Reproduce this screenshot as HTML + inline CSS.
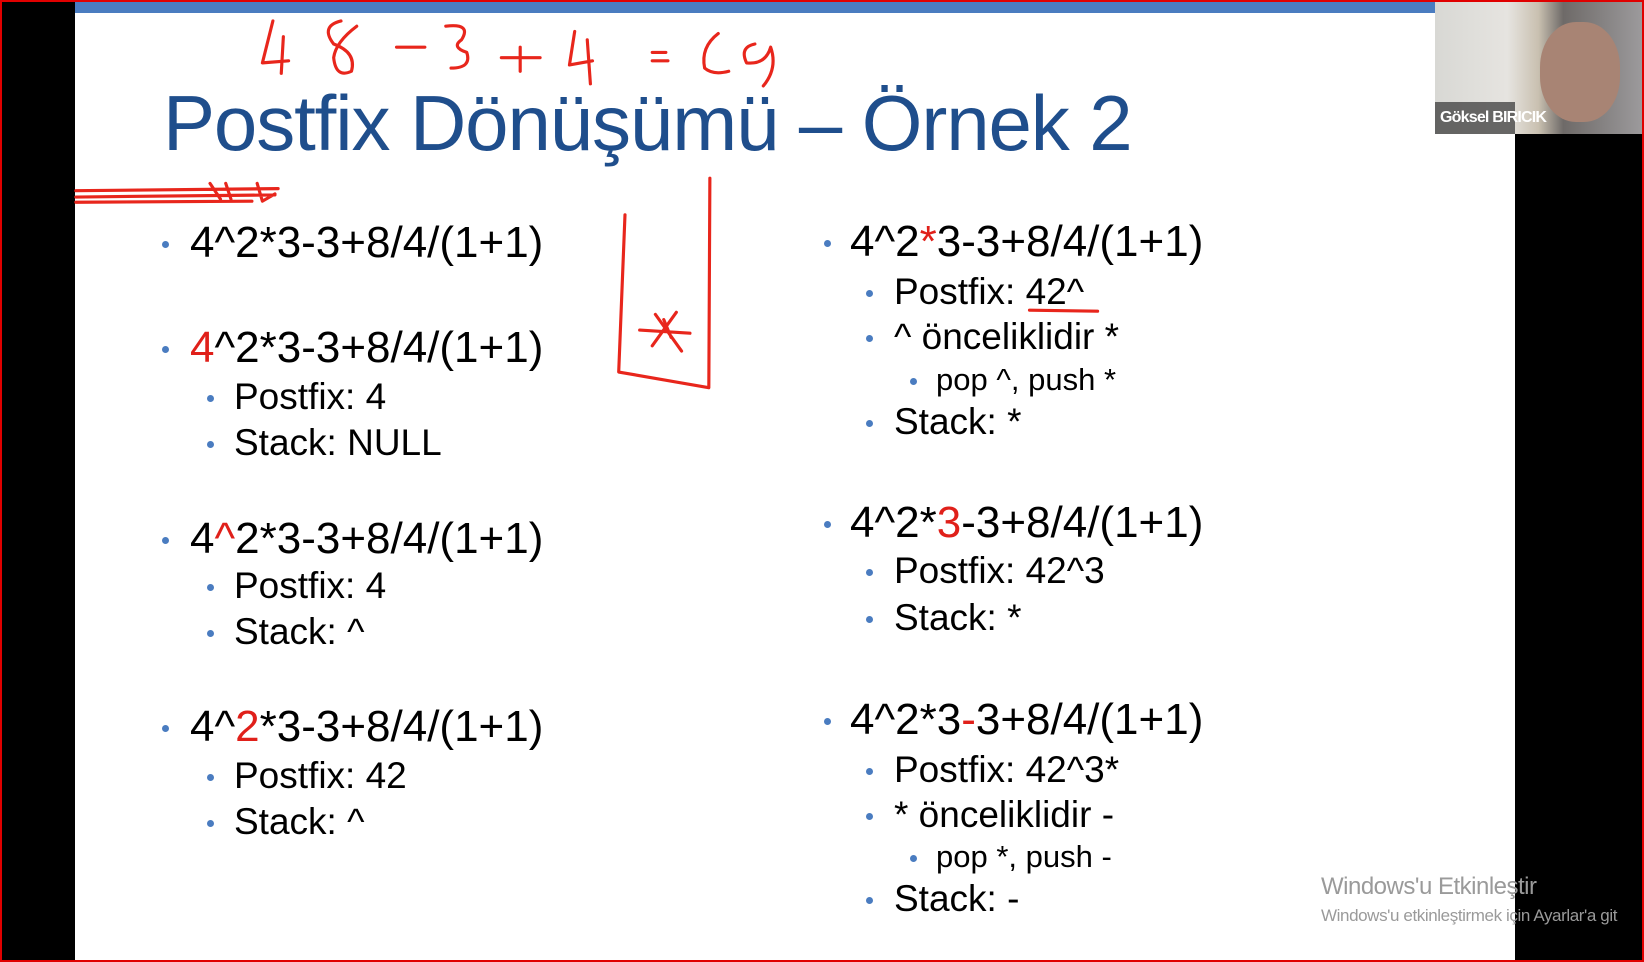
<!DOCTYPE html>
<html><head><meta charset="utf-8"><style>
*{margin:0;padding:0}
body{width:1644px;height:962px;overflow:hidden;background:#000;position:relative;font-family:"Liberation Sans",Arial,sans-serif}
#frame{position:absolute;left:0;top:0;width:1640px;height:958px;border:2px solid #e00000}
#slide{position:absolute;left:75px;top:2px;width:1440px;height:958px;background:#fff}
#bar{position:absolute;left:75px;top:2px;width:1360px;height:11px;background:#4a7cc0}
.t{position:absolute;white-space:nowrap;color:#000;line-height:1}
.l1{font-size:44px}
.l2{font-size:37px}
.l3{font-size:31px}
.r{color:#e0201a}
.b{position:absolute;width:7px;height:7px;border-radius:50%;background:#4a7cc0}
#title{position:absolute;left:163px;top:84px;font-size:78px;color:#1f4e8c;white-space:nowrap;line-height:1;letter-spacing:-1.1px}
#cam{position:absolute;left:1435px;top:2px;width:207px;height:132px;background:linear-gradient(90deg,#d8d8d4 0,#e6e4e0 35%,#c9c0b0 50%,#6e6a68 62%,#9c9a9c 100%)}
#face{position:absolute;left:1540px;top:22px;width:80px;height:100px;border-radius:45%;background:#a88474}
#name{position:absolute;left:1435px;top:102px;width:80px;height:32px;background:rgba(60,60,60,.75);color:#fff;font-size:16px;font-weight:bold;line-height:32px;padding-left:5px;box-sizing:border-box;white-space:nowrap;letter-spacing:-.8px}
.wm{position:absolute;color:#9a9a9a;white-space:nowrap}
</style></head><body>
<div id="frame"></div>
<div id="slide"></div>
<div id="bar"></div>
<div id="title">Postfix Dönüşümü – Örnek 2</div>

<div class="b" style="left:162px;top:241px"></div><div class="t l1" style="left:190px;top:221px">4^2*3-3+8/4/(1+1)</div>
<div class="b" style="left:162px;top:346px"></div><div class="t l1" style="left:190px;top:326px"><span class="r">4</span>^2*3-3+8/4/(1+1)</div>
<div class="b" style="left:207px;top:395px"></div><div class="t l2" style="left:234px;top:378px">Postfix: 4</div>
<div class="b" style="left:207px;top:441px"></div><div class="t l2" style="left:234px;top:424px">Stack: NULL</div>
<div class="b" style="left:162px;top:537px"></div><div class="t l1" style="left:190px;top:517px">4<span class="r">^</span>2*3-3+8/4/(1+1)</div>
<div class="b" style="left:207px;top:584px"></div><div class="t l2" style="left:234px;top:567px">Postfix: 4</div>
<div class="b" style="left:207px;top:630px"></div><div class="t l2" style="left:234px;top:613px">Stack: ^</div>
<div class="b" style="left:162px;top:725px"></div><div class="t l1" style="left:190px;top:705px">4^<span class="r">2</span>*3-3+8/4/(1+1)</div>
<div class="b" style="left:207px;top:774px"></div><div class="t l2" style="left:234px;top:757px">Postfix: 42</div>
<div class="b" style="left:207px;top:820px"></div><div class="t l2" style="left:234px;top:803px">Stack: ^</div>

<div class="b" style="left:824px;top:240px"></div><div class="t l1" style="left:850px;top:220px">4^2<span class="r">*</span>3-3+8/4/(1+1)</div>
<div class="b" style="left:866px;top:290px"></div><div class="t l2" style="left:894px;top:273px">Postfix: 42^</div>
<div class="b" style="left:866px;top:335px"></div><div class="t l2" style="left:894px;top:318px">^ önceliklidir *</div>
<div class="b" style="left:910px;top:378px"></div><div class="t l3" style="left:936px;top:364px">pop ^, push *</div>
<div class="b" style="left:866px;top:420px"></div><div class="t l2" style="left:894px;top:403px">Stack: *</div>
<div class="b" style="left:824px;top:521px"></div><div class="t l1" style="left:850px;top:501px">4^2*<span class="r">3</span>-3+8/4/(1+1)</div>
<div class="b" style="left:866px;top:569px"></div><div class="t l2" style="left:894px;top:552px">Postfix: 42^3</div>
<div class="b" style="left:866px;top:616px"></div><div class="t l2" style="left:894px;top:599px">Stack: *</div>
<div class="b" style="left:824px;top:718px"></div><div class="t l1" style="left:850px;top:698px">4^2*3<span class="r">-</span>3+8/4/(1+1)</div>
<div class="b" style="left:866px;top:768px"></div><div class="t l2" style="left:894px;top:751px">Postfix: 42^3*</div>
<div class="b" style="left:866px;top:813px"></div><div class="t l2" style="left:894px;top:796px">* önceliklidir -</div>
<div class="b" style="left:910px;top:855px"></div><div class="t l3" style="left:936px;top:841px">pop *, push -</div>
<div class="b" style="left:866px;top:897px"></div><div class="t l2" style="left:894px;top:880px">Stack: -</div>

<div style="position:absolute;left:1515px;top:134px;width:125px;height:824px;background:#000"></div>
<div class="wm" style="left:1321px;top:873px;font-size:24px;letter-spacing:-.5px">Windows'u Etkinleştir</div>
<div class="wm" style="left:1321px;top:906px;font-size:17px;letter-spacing:-.4px">Windows'u etkinleştirmek için Ayarlar'a git</div>

<svg style="position:absolute;left:0;top:0" width="1644" height="962" viewBox="0 0 1568 918" fill="none" stroke="#e8261c" stroke-width="3" stroke-linecap="round" stroke-linejoin="round">
<path d="M260 20 L250 60 L275 58 M270 35 L268 70"/>
<path d="M325 20 Q305 25 318 42 Q340 50 335 68 Q320 75 318 55 Q320 40 340 25"/>
<path d="M378 45 L405 45"/>
<path d="M425 25 Q450 22 440 38 Q430 45 445 50 Q450 65 430 65"/>
<path d="M478 55 L515 55 M496 45 L496 68"/>
<path d="M548 30 L543 62 L565 58 M560 38 L563 80"/>
<path d="M622 50 L635 50 M622 58 L637 58"/>
<path d="M685 32 Q668 45 672 65 Q680 72 695 68"/>
<path d="M720 42 Q705 45 712 60 Q730 62 735 45 Q742 65 728 82"/>
<path d="M72 182 L265 180 M72 188 L262 186 M72 193 L240 192 M200 175 L210 190 M215 175 L220 190 M245 175 L250 192 L262 185"/>
<path d="M596 205 L590 355 L676 370 L677 170"/>
<path d="M610 315 L658 318 M625 300 L650 335 M645 298 L622 330 M633 305 L640 322"/>
<path d="M982 296 L1047 297"/>
</svg>

<div id="cam"></div>
<div id="face"></div>
<div id="name">Göksel BIRICIK</div>
</body></html>
